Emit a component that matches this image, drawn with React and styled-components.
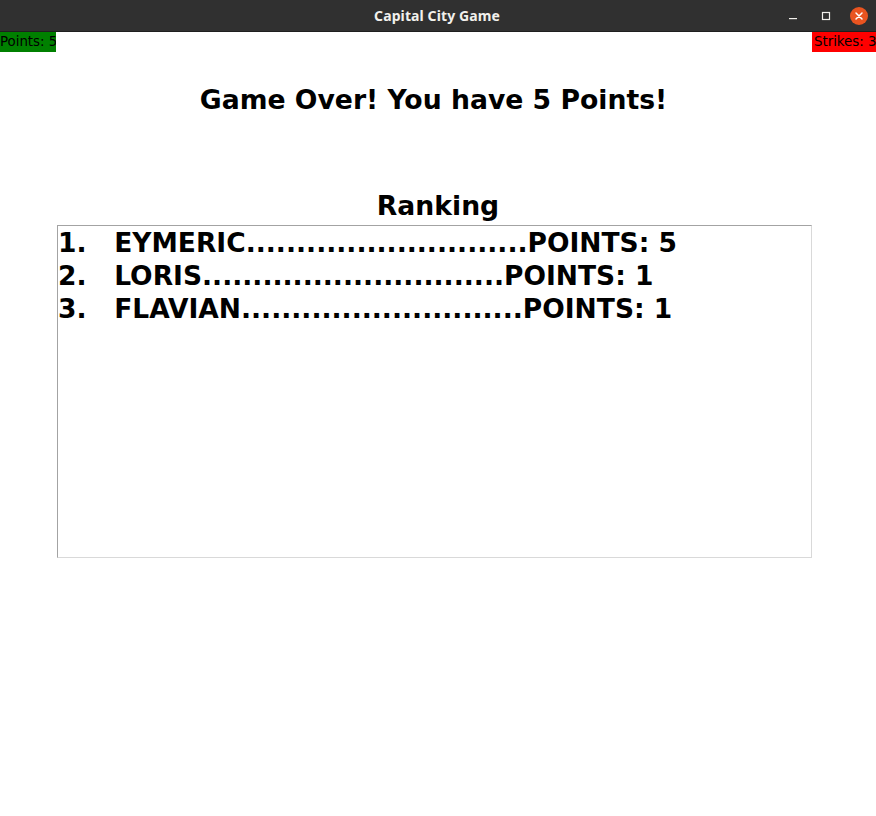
import React from "react";
import styled, { createGlobalStyle } from "styled-components";

const Global = createGlobalStyle`
  html, body { margin: 0; padding: 0; background: #ffffff; }
  body { font-family: "DejaVu Sans", sans-serif; }
`;

const Frame = styled.div`
  width: 876px;
  height: 816px;
  display: flex;
  flex-direction: column;
  background: #ffffff;
`;

const TitleBar = styled.div`
  height: 32px;
  flex: 0 0 32px;
  background: #303030;
  border-bottom: 1px solid #1f1f1f;
  box-sizing: border-box;
  display: grid;
  grid-template-columns: 1fr auto 1fr;
  align-items: center;
`;

const Title = styled.div`
  grid-column: 2;
  color: #f2f0ec;
  font-family: "Noto Sans", "DejaVu Sans", sans-serif;
  font-weight: 700;
  font-size: 14px;
  letter-spacing: 0.1px;
  padding-right: 2px;
`;

const Controls = styled.div`
  grid-column: 3;
  justify-self: end;
  display: flex;
  align-items: center;
  gap: 15px;
  padding-right: 8px;
`;

const CtrlBtn = styled.div`
  width: 18px;
  height: 18px;
  display: flex;
  align-items: center;
  justify-content: center;
  border-radius: 50%;
  background: ${(p) => (p.$close ? "#e95420" : "transparent")};
`;

const Content = styled.div`
  flex: 1;
  display: flex;
  flex-direction: column;
`;

const StatusRow = styled.div`
  display: flex;
  justify-content: space-between;
  align-items: flex-start;
`;

const Badge = styled.div`
  width: ${(p) => p.$w}px;
  height: 20px;
  line-height: 20px;
  box-sizing: border-box;
  padding-left: ${(p) => p.$pl}px;
  font-family: "DejaVu Sans", sans-serif;
  font-size: 13.33px;
  color: #000;
  background: ${(p) => p.$bg};
  white-space: nowrap;
  overflow: hidden;
`;

const Heading = styled.div`
  text-align: center;
  font-family: "DejaVu Sans", sans-serif;
  font-weight: 700;
  font-size: 26.67px;
  line-height: 32px;
  color: #000;
  margin-top: ${(p) => p.$mt}px;
  padding-right: ${(p) => p.$pr || 0}px;
`;

const ListBox = styled.div`
  margin: 3px 0 0 57px;
  width: 755px;
  height: 333px;
  box-sizing: border-box;
  border-style: solid;
  border-width: 1px;
  border-color: #a3a3a3 #d9d9d9 #d9d9d9 #a3a3a3;
  background: #ffffff;
  padding: 0;
  overflow: hidden;
`;

const Entry = styled.div`
  font-family: "DejaVu Sans", sans-serif;
  font-weight: 700;
  font-size: 26.5px;
  line-height: 33px;
  color: #000;
  white-space: pre;
`;

const ranking = [
  { name: "EYMERIC", points: 5 },
  { name: "LORIS", points: 1 },
  { name: "FLAVIAN", points: 1 },
];

export default function App() {
  return (
    <>
      <Global />
      <Frame>
        <TitleBar>
          <Title>Capital City Game</Title>
          <Controls>
            <CtrlBtn>
              <svg width="10" height="10" viewBox="0 0 10 10">
                <rect x="1" y="7" width="8" height="1.2" fill="#f2f0ec" />
              </svg>
            </CtrlBtn>
            <CtrlBtn>
              <svg width="10" height="10" viewBox="0 0 10 10">
                <rect x="1.5" y="1.5" width="7" height="7" fill="none" stroke="#f2f0ec" strokeWidth="1.2" />
              </svg>
            </CtrlBtn>
            <CtrlBtn $close>
              <svg width="10" height="10" viewBox="0 0 10 10">
                <path d="M2 2 L8 8 M8 2 L2 8" stroke="#ffffff" strokeWidth="1.5" strokeLinecap="round" />
              </svg>
            </CtrlBtn>
          </Controls>
        </TitleBar>
        <Content>
          <StatusRow>
            <Badge $bg="#008000" $w={56} $pl={0}>Points: 5</Badge>
            <Badge $bg="#ff0000" $w={64} $pl={2}>Strikes: 3</Badge>
          </StatusRow>
          <Heading $mt={32} $pr={9}>Game Over! You have 5 Points!</Heading>
          <Heading $mt={74}>Ranking</Heading>
          <ListBox>
            {ranking.map((r, i) => (
              <Entry key={r.name}>
                {`${i + 1}.   ${r.name}${".".repeat(35 - r.name.length)}POINTS: ${r.points}`}
              </Entry>
            ))}
          </ListBox>
        </Content>
      </Frame>
    </>
  );
}
